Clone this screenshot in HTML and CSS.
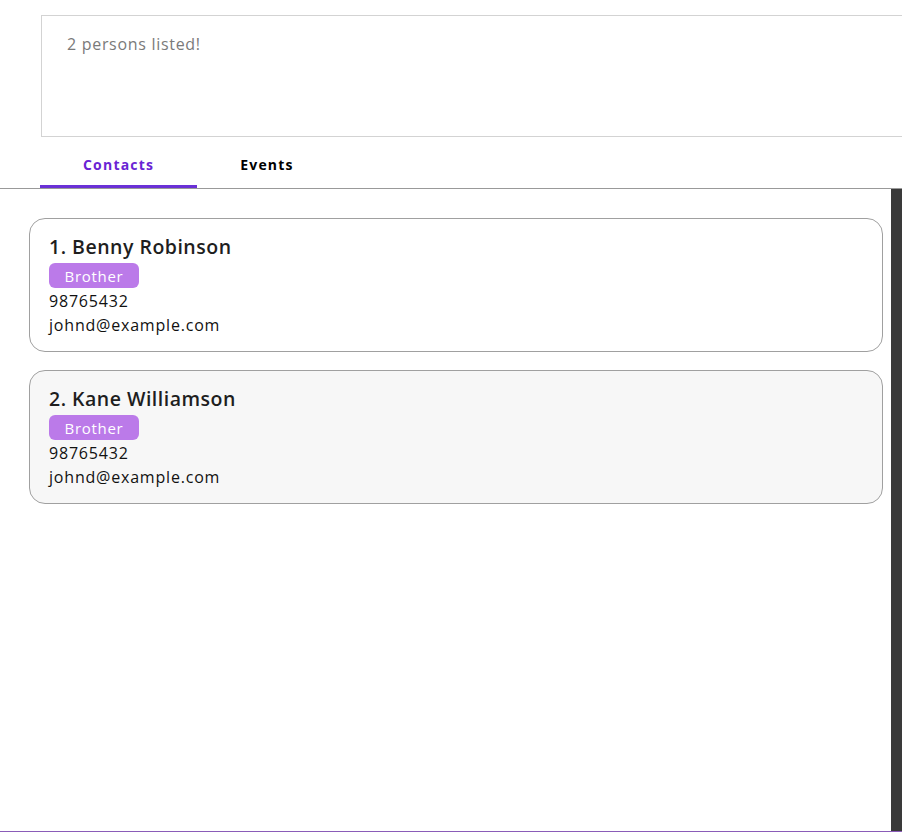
FILE: index.html
```html
<!DOCTYPE html>
<html>
<head>
<meta charset="utf-8">
<link rel="stylesheet" href="styles.css">
</head>
<body>
<div class="app">
  <div class="result-wrap">
    <div class="result-box">2 persons listed!</div>
  </div>
  <div class="tabs">
    <div class="tab active">Contacts</div>
    <div class="tab">Events</div>
  </div>
  <div class="content">
    <div class="list">
      <div class="card">
        <div class="name">1. Benny Robinson</div>
        <div class="tags"><span class="tag">Brother</span></div>
        <div class="line">98765432</div>
        <div class="line">johnd@example.com</div>
      </div>
      <div class="card alt">
        <div class="name">2. Kane Williamson</div>
        <div class="tags"><span class="tag">Brother</span></div>
        <div class="line">98765432</div>
        <div class="line">johnd@example.com</div>
      </div>
    </div>
    <div class="scrollbar"></div>
  </div>
</div>
</body>
</html>
```
FILE: styles.css
```css
html, body {
  margin: 0;
  padding: 0;
  background: #ffffff;
  overflow: hidden;
}
body {
  font-family: "Open Sans", "Liberation Sans", sans-serif;
  color: #1f1f1f;
}
.app {
  width: 902px;
  height: 832px;
  display: flex;
  flex-direction: column;
  overflow: hidden;
}
.result-wrap {
  padding: 15px 0 0 41px;
}
.result-box {
  box-sizing: border-box;
  height: 122px;
  width: 880px;
  border: 1px solid #d3d3d3;
  padding: 17px 25px;
  font-size: 16px;
  color: #7a7a7a;
  letter-spacing: 0.7px;
}
.tabs {
  display: flex;
  padding-left: 40px;
  height: 51px;
  border-bottom: 1px solid #999999;
}
.tab {
  padding: 7px 43px 0;
  display: flex;
  align-items: center;
  justify-content: center;
  font-weight: 700;
  font-size: 14px;
  letter-spacing: 1.2px;
  color: #000;
  border-bottom: 3px solid transparent;
}
.tab.active {
  color: #6a24d4;
  border-bottom-color: #6a30d6;
}
.content {
  flex: 1;
  display: flex;
  border-bottom: 1px solid #8a5cb8;
}
.list {
  flex: 1;
  padding: 29px 8px 0 29px;
  display: flex;
  flex-direction: column;
  gap: 18px;
}
.scrollbar {
  width: 11px;
  background: #3a3a3a;
}
.card {
  box-sizing: border-box;
  height: 134px;
  border: 1px solid #a0a0a0;
  border-radius: 16px;
  background: #ffffff;
  padding: 14px 19px 0;
}
.card.alt {
  background: #f7f7f7;
}
.name {
  font-size: 19.5px;
  font-weight: 600;
  line-height: 28px;
  letter-spacing: 0.5px;
  color: #1e1e1e;
}
.tags {
  display: flex;
  margin: 2px 0 1px;
}
.tag {
  box-sizing: border-box;
  width: 90px;
  height: 25px;
  border-radius: 6px;
  background: #bb7ae9;
  color: #ffffff;
  font-size: 15px;
  letter-spacing: 0.7px;
  display: flex;
  align-items: center;
  justify-content: center;
}
.line {
  font-size: 16px;
  line-height: 24px;
  letter-spacing: 0.8px;
  color: #111;
}
```
